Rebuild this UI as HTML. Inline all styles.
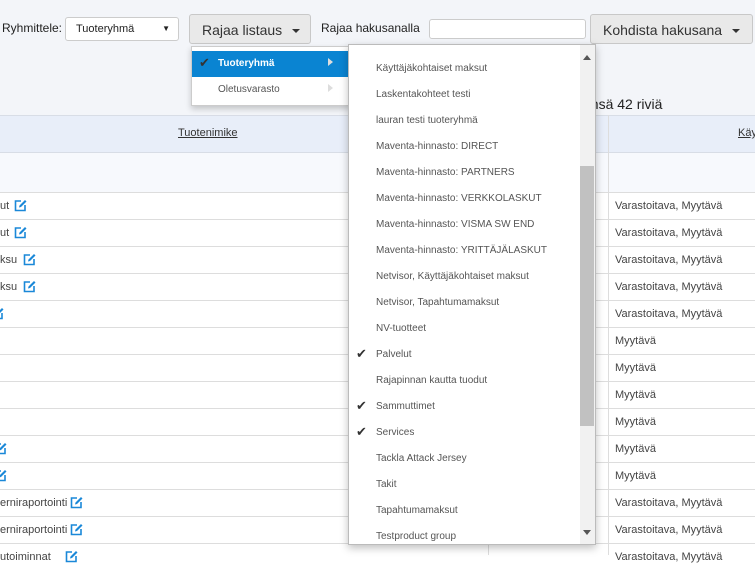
<!DOCTYPE html>
<html><head><meta charset="utf-8"><style>
*{margin:0;padding:0;box-sizing:border-box}
body{width:755px;height:555px;overflow:hidden;background:#f3f5f9;font-family:"Liberation Sans",sans-serif;position:relative;color:#333}
.a{position:absolute}
.btn{position:absolute;background:#e9e9e9;border:1px solid #c8c8c8;border-radius:3px;font-size:14px;color:#333;padding-top:7px;padding-left:12px}
.caret{display:inline-block;width:0;height:0;border-left:4px solid transparent;border-right:4px solid transparent;border-top:4px solid #333;vertical-align:middle;margin-left:10px}
.row{position:absolute;left:0;width:755px;height:27px;border-top:1px solid #ddd;background:#fff}
.cell{position:absolute;font-size:11px;color:#444;top:7px}
.ed{position:absolute;top:6px;width:13px;height:13px}
.it{position:absolute;left:27px;font-size:10px;color:#555}
.ck{position:absolute;left:7px;font-size:13px;color:#333}
</style></head><body>
<svg width="0" height="0" style="position:absolute"><symbol id="e" viewBox="0 0 13 13"><path d="M7 2H1.5v9.5H11V6" fill="none" stroke="#1a88d8" stroke-width="1.6"/><path d="M5 8.5l.5-2L11 1l1.5 1.5L7 8z" fill="#1a88d8"/></symbol></svg>
<div class="a" style="left:2px;top:21px;font-size:12px;color:#222">Ryhmittele:</div>
<div class="a" style="left:65px;top:17px;width:114px;height:24px;background:#fff;border:1px solid #ccc;border-radius:3px;font-size:11px;padding:5px 0 0 10px;color:#222">Tuoteryhmä<span style="position:absolute;right:8px;top:6px;font-size:8px">▼</span></div>
<div class="btn" style="left:189px;top:14px;width:122px;height:30px">Rajaa listaus<span class="caret"></span></div>
<div class="a" style="left:321px;top:21px;font-size:12px;color:#222">Rajaa hakusanalla</div>
<div class="a" style="left:429px;top:19px;width:157px;height:20px;background:#fff;border:1px solid #ccc;border-radius:3px"></div>
<div class="btn" style="left:590px;top:14px;width:163px;height:30px">Kohdista hakusana<span class="caret"></span></div>
<div class="a" style="left:583px;top:96px;font-size:14px;color:#222">ensä 42 riviä</div>
<div class="a" style="left:0;top:115px;width:755px;height:38px;background:#e8eef9;border-top:1px solid #d8dde6;border-bottom:1px solid #d8dde6"></div>
<div class="a" style="left:178px;top:127px;font-size:11px;color:#333;text-decoration:underline">Tuotenimike</div>
<div class="a" style="left:738px;top:127px;font-size:11px;color:#333;text-decoration:underline">Käy</div>
<div class="a" style="left:0;top:153px;width:755px;height:39px;background:#f7f9fd"></div>
<div class="row" style="top:192px"><span class="cell" style="left:0">ut</span><svg class="ed" style="left:14px"><use href="#e"/></svg><span class="cell" style="left:615px">Varastoitava, Myytävä</span></div>
<div class="row" style="top:219px"><span class="cell" style="left:0">ut</span><svg class="ed" style="left:14px"><use href="#e"/></svg><span class="cell" style="left:615px">Varastoitava, Myytävä</span></div>
<div class="row" style="top:246px"><span class="cell" style="left:0">ksu</span><svg class="ed" style="left:23px"><use href="#e"/></svg><span class="cell" style="left:615px">Varastoitava, Myytävä</span></div>
<div class="row" style="top:273px"><span class="cell" style="left:0">ksu</span><svg class="ed" style="left:23px"><use href="#e"/></svg><span class="cell" style="left:615px">Varastoitava, Myytävä</span></div>
<div class="row" style="top:300px"><svg class="ed" style="left:-9px"><use href="#e"/></svg><span class="cell" style="left:615px">Varastoitava, Myytävä</span></div>
<div class="row" style="top:327px"><span class="cell" style="left:615px">Myytävä</span></div>
<div class="row" style="top:354px"><span class="cell" style="left:615px">Myytävä</span></div>
<div class="row" style="top:381px"><span class="cell" style="left:615px">Myytävä</span></div>
<div class="row" style="top:408px"><span class="cell" style="left:615px">Myytävä</span></div>
<div class="row" style="top:435px"><svg class="ed" style="left:-6px"><use href="#e"/></svg><span class="cell" style="left:615px">Myytävä</span></div>
<div class="row" style="top:462px"><svg class="ed" style="left:-6px"><use href="#e"/></svg><span class="cell" style="left:615px">Myytävä</span></div>
<div class="row" style="top:489px"><span class="cell" style="left:0">erniraportointi</span><svg class="ed" style="left:70px"><use href="#e"/></svg><span class="cell" style="left:615px">Varastoitava, Myytävä</span></div>
<div class="row" style="top:516px"><span class="cell" style="left:0">erniraportointi</span><svg class="ed" style="left:70px"><use href="#e"/></svg><span class="cell" style="left:615px">Varastoitava, Myytävä</span></div>
<div class="row" style="top:543px"><span class="cell" style="left:0">utoiminnat</span><svg class="ed" style="left:65px"><use href="#e"/></svg><span class="cell" style="left:615px">Varastoitava, Myytävä</span></div>
<div class="a" style="left:608px;top:115px;width:1px;height:440px;background:#ddd"></div>
<div class="a" style="left:488px;top:115px;width:1px;height:440px;background:#ddd"></div>
<div class="a" style="left:191px;top:46px;width:160px;height:60px;background:#fff;border:1px solid #ccc;box-shadow:0 3px 6px rgba(0,0,0,.2)">
<div class="a" style="left:0;top:4px;width:158px;height:26px;background:#0a84d2"></div>
<div class="a" style="left:7px;top:8px;font-size:13px;color:#333">✔</div>
<div class="a" style="left:26px;top:11px;font-size:10px;color:#fff;font-weight:bold">Tuoteryhmä</div>
<div class="a" style="left:136px;top:11px;width:0;height:0;border-top:4px solid transparent;border-bottom:4px solid transparent;border-left:5px solid #ddd"></div>
<div class="a" style="left:26px;top:37px;font-size:10px;color:#555">Oletusvarasto</div>
<div class="a" style="left:136px;top:37px;width:0;height:0;border-top:4px solid transparent;border-bottom:4px solid transparent;border-left:5px solid #ddd"></div>
</div>
<div class="a" style="left:348px;top:44px;width:248px;height:501px;background:#fff;border:1px solid #bbb;box-shadow:0 3px 8px rgba(0,0,0,.25);overflow:hidden">
<div class="it" style="top:-8px">Kaikki tuotteet</div>
<div class="it" style="top:18px">Käyttäjäkohtaiset maksut</div>
<div class="it" style="top:44px">Laskentakohteet testi</div>
<div class="it" style="top:70px">lauran testi tuoteryhmä</div>
<div class="it" style="top:96px">Maventa-hinnasto: DIRECT</div>
<div class="it" style="top:122px">Maventa-hinnasto: PARTNERS</div>
<div class="it" style="top:148px">Maventa-hinnasto: VERKKOLASKUT</div>
<div class="it" style="top:174px">Maventa-hinnasto: VISMA SW END</div>
<div class="it" style="top:200px">Maventa-hinnasto: YRITTÄJÄLASKUT</div>
<div class="it" style="top:226px">Netvisor, Käyttäjäkohtaiset maksut</div>
<div class="it" style="top:252px">Netvisor, Tapahtumamaksut</div>
<div class="it" style="top:278px">NV-tuotteet</div>
<div class="ck" style="top:301px">✔</div><div class="it" style="top:304px">Palvelut</div>
<div class="it" style="top:330px">Rajapinnan kautta tuodut</div>
<div class="ck" style="top:353px">✔</div><div class="it" style="top:356px">Sammuttimet</div>
<div class="ck" style="top:379px">✔</div><div class="it" style="top:382px">Services</div>
<div class="it" style="top:408px">Tackla Attack Jersey</div>
<div class="it" style="top:434px">Takit</div>
<div class="it" style="top:460px">Tapahtumamaksut</div>
<div class="it" style="top:486px">Testproduct group</div>
<div class="a" style="left:231px;top:0;width:15px;height:499px;background:#f1f1f1"></div>
<div class="a" style="left:231px;top:121px;width:14px;height:260px;background:#c1c1c1"></div>
<div class="a" style="left:234px;top:10px;width:0;height:0;border-left:4px solid transparent;border-right:4px solid transparent;border-bottom:5px solid #555"></div>
<div class="a" style="left:234px;top:485px;width:0;height:0;border-left:4px solid transparent;border-right:4px solid transparent;border-top:5px solid #555"></div>
</div>
</body></html>
